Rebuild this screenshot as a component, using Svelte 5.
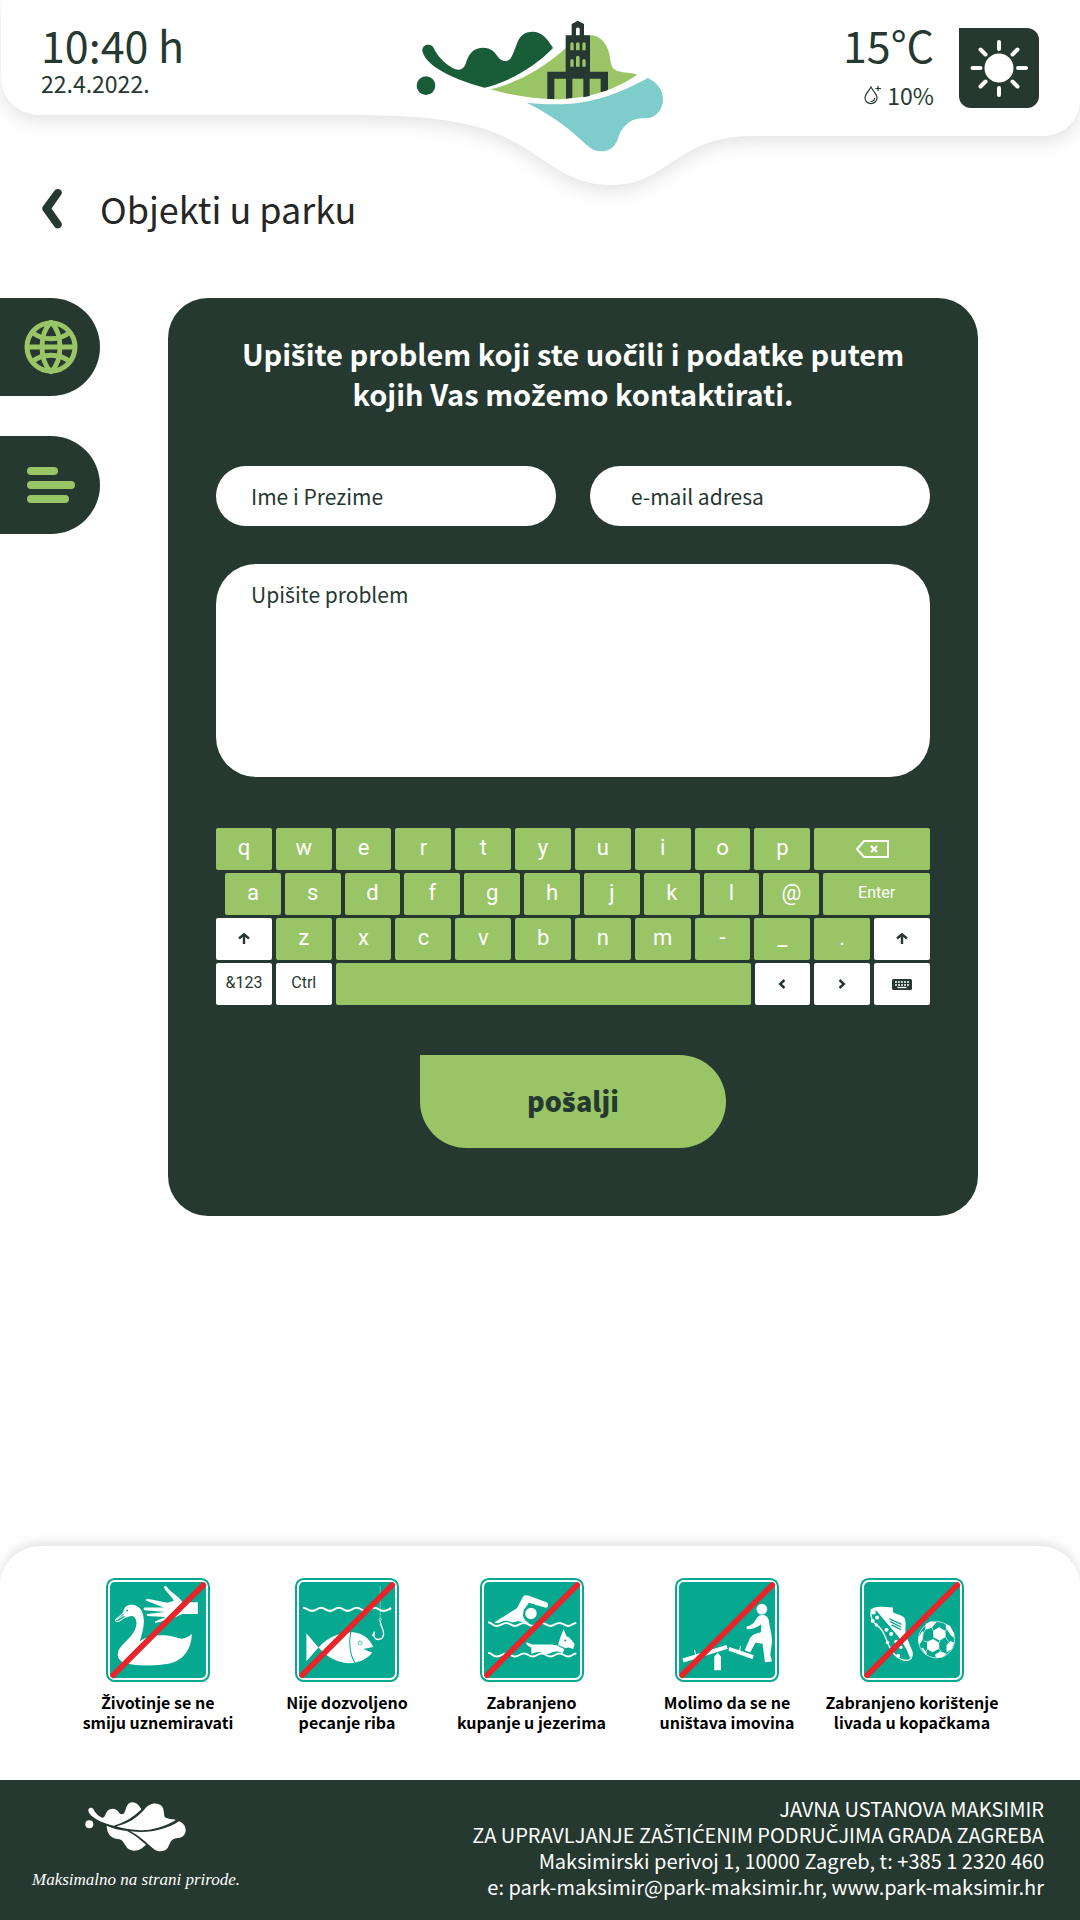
<script>
  let name = $state('');
  let email = $state('');
  let problem = $state('');

  const rowOne = ['q', 'w', 'e', 'r', 't', 'y', 'u', 'i', 'o', 'p'];
  const rowTwo = ['a', 's', 'd', 'f', 'g', 'h', 'j', 'k', 'l', '@'];
  const rowThree = ['z', 'x', 'c', 'v', 'b', 'n', 'm', '-', '_', '.'];

  const signs = [
    { id: 'swan', lines: ['Životinje se ne', 'smiju uznemiravati'] },
    { id: 'fish', lines: ['Nije dozvoljeno', 'pecanje riba'] },
    { id: 'swim', lines: ['Zabranjeno', 'kupanje u jezerima'] },
    { id: 'seesaw', lines: ['Molimo da se ne', 'uništava imovina'] },
    { id: 'boots', lines: ['Zabranjeno korištenje', 'livada u kopačkama'] }
  ];

  const type = (key) => (problem += key);

  // The main family has no Croatian accented letters, so these get their own font.
  const accented = /([čćšžČĆŠŽ])/;
  const pieces = (text) => text.split(accented).filter((part) => part !== '');
</script>

{#snippet hr(text)}{#each pieces(text) as part}{#if accented.test(part)}<span class="accent">{part}</span>{:else}{part}{/if}{/each}{/snippet}

{#snippet arrowUp()}
  <svg width="14" height="14" viewBox="0 0 14 14" aria-hidden="true">
    <path d="M7 12V3M2 6.500 7 2.400l5 4.100" fill="none" stroke="currentColor" stroke-width="2.400" />
  </svg>
{/snippet}

<div class="page">
  <header>
    <svg class="header-shape" viewBox="0 0 1080 230" preserveAspectRatio="none" aria-hidden="true">
      <path d="M1-40V76C1 98 17 115 40 115H340C440 115 480 122 520 145C556 167 572 185 612 185C668 185 676 136 752 136H1043C1064 136 1080 120 1080 98V-40Z" />
    </svg>
    <div class="clock">
      <span class="big">10:40 h</span>
      <span class="small">22.4.2022.</span>
    </div>
    <svg class="logo" width="248" height="132" viewBox="50 58 744 396" role="img" aria-label="Park Maksimir">
      <g fill="#195c38">
        <circle cx="80" cy="255" r="28" />
        <path d="M69 150C69 136 79 131 89 132C100 133 103 141 106 148C118 172 148 198 168 206C180 210 192 206 199 190C206 165 218 142 250 141C276 141 288 156 297 170C304 182 323 186 333 174C343 161 346 143 357 119C365 102 380 93 399 93C428 93 445 115 461 142C410 195 330 245 255 261C200 246 150 227 115 204C90 188 72 168 69 150Z" />
      </g>
      <path d="M273 266C350 248 430 205 499 143L535 104H572C600 104 622 125 630 160C634 180 633 198 648 208C662 217 690 214 714 222C640 270 570 294 460 296C400 293 330 283 273 266Z" fill="#9ac567" />
      <path d="M517 70L535 60L554 70V104H572V213H626V268L604 275V234H571V286L552 290V234H519V291L500 294V234H465V295H444V213H499V104H517Z" fill="#253831" />
      <path d="M530 104V86a5.500 5.500 0 0 1 11 0V104Z" fill="#fff" />
      <path d="M513 149V130a5 5 0 0 1 10 0V149ZM530 149V130a5.500 5.500 0 0 1 11 0V149ZM549 149V130a5 5 0 0 1 10 0V149ZM513 198V180a5 5 0 0 1 10 0V198ZM530 198V171a5.500 5.500 0 0 1 11 0V198ZM549 198V180a5 5 0 0 1 10 0V198Z" fill="#9ac567" />
      <path d="M382 306C420 311 490 313 540 306C620 296 690 262 746 232C775 246 791 270 791 297C790 330 765 352 745 352C715 353 700 355 683 370C662 388 660 405 653 421C643 443 625 452 607 452C580 452 565 437 553 425C500 373 440 335 382 306Z" fill="#7fcccc" />
    </svg>
    <div class="weather">
      <div class="readings">
        <span class="big">15°C</span>
        <span class="small humidity">
          <svg width="17" height="20" viewBox="0 0 17 20" fill="none" stroke="currentColor" aria-hidden="true">
            <path d="M7 2C5 6 1 9 1 13a6 5.600 0 0 0 12 0C13 9 9 6 7 2Z" stroke-width="1.200" />
            <path d="M6.500 16.500C9 16.500 10.500 15 10.700 13M14 1V6M11.500 3.500H17" stroke-width="1.200" />
          </svg>
          10%
        </span>
      </div>
      <div class="sun">
        <svg width="80" height="80" viewBox="0 0 80 80" role="img" aria-label="Sunčano">
          <circle cx="40" cy="40" r="14.500" fill="#fff" />
          <path d="M40 14v7M40 60v7M13.500 40h8M59 40h8M21.500 21.500l5 5M53.500 53.500l5 5M21.500 58.500l5-5M53.500 26.500l5-5" stroke="#fff" stroke-width="4" stroke-linecap="round" />
        </svg>
      </div>
    </div>
  </header>

  <nav class="crumb">
    <a href="#nazad" aria-label="Nazad">
      <svg width="21" height="41" viewBox="0 0 21 41" aria-hidden="true">
        <path d="M13 2C17-1 22 3 19 7L9.500 20.500L19 34C22 38 17 42.500 13 39.500L0.800 22.500C0 21.500 0 19.500 0.800 18.500Z" />
      </svg>
    </a>
    <h1>Objekti u parku</h1>
  </nav>

  <main>
    <aside>
      <button class="tab" type="button" aria-label="Jezik">
        <svg width="54" height="54" viewBox="0 0 54 54" fill="none" stroke="#9ac567" aria-hidden="true">
          <circle cx="27" cy="27" r="24" stroke-width="5" />
          <path d="M2 27H52M27 2C15 14 15 40 27 52C39 40 39 14 27 2ZM8 12C18 21 36 21 46 12M8 42C18 33 36 33 46 42" stroke-width="4.800" />
        </svg>
      </button>
      <button class="tab" type="button" aria-label="Izbornik">
        <svg width="54" height="36" viewBox="0 0 54 36" fill="#9ac567" aria-hidden="true">
          <rect x="3" width="31" height="8" rx="4" />
          <rect x="3" y="14" width="48" height="8" rx="4" />
          <rect x="3" y="28" width="42" height="8" rx="4" />
        </svg>
      </button>
    </aside>

    <form class="card" onsubmit={(e) => e.preventDefault()}>
      <h2>{@render hr('Upišite problem koji ste uočili i podatke putem')}<br />{@render hr('kojih Vas možemo kontaktirati.')}</h2>
      <div class="fields">
        <input type="text" aria-label="Ime i Prezime" placeholder="Ime i Prezime" bind:value={name} />
        <input class="email" type="email" aria-label="e-mail adresa" placeholder="e-mail adresa" bind:value={email} />
      </div>
      <div class="message">
        <textarea id="problem" bind:value={problem}></textarea>
        <label for="problem" class:filled={problem !== ''}>{@render hr('Upišite problem')}</label>
      </div>

      <div class="keyboard">
        <div class="keys">
          {#each rowOne as key}<button type="button" onclick={() => type(key)}>{key}</button>{/each}
          <button class="grow" type="button" aria-label="Briši" onclick={() => (problem = problem.slice(0, -1))}>
            <svg width="33" height="18" viewBox="0 0 33 18" fill="none" stroke="currentColor" stroke-width="2" aria-hidden="true">
              <path d="M8 1H32V17H8L1 9Z" /><path d="M15 6l6 6M21 6l-6 6" stroke-width="2.400" />
            </svg>
          </button>
        </div>
        <div class="keys indent">
          {#each rowTwo as key}<button type="button" onclick={() => type(key)}>{key}</button>{/each}
          <button class="grow word" type="button" onclick={() => type('\n')}>Enter</button>
        </div>
        <div class="keys">
          <button class="light" type="button" aria-label="Shift lijevo">{@render arrowUp()}</button>
          {#each rowThree as key}<button type="button" onclick={() => type(key)}>{key}</button>{/each}
          <button class="light" type="button" aria-label="Shift desno">{@render arrowUp()}</button>
        </div>
        <div class="keys">
          <button class="light word" type="button">&amp;123</button>
          <button class="light word" type="button">Ctrl</button>
          <button class="grow" type="button" aria-label="Razmak" onclick={() => type(' ')}></button>
          <button class="light" type="button" aria-label="Lijevo">
            <svg width="8" height="10" viewBox="0 0 8 10" aria-hidden="true"><path d="M6.500 1L2.200 5l4.300 4" fill="none" stroke="currentColor" stroke-width="2.400" /></svg>
          </button>
          <button class="light" type="button" aria-label="Desno">
            <svg width="8" height="10" viewBox="0 0 8 10" aria-hidden="true"><path d="M1.500 1l4.300 4-4.300 4" fill="none" stroke="currentColor" stroke-width="2.400" /></svg>
          </button>
          <button class="light" type="button" aria-label="Sakrij tipkovnicu">
            <svg width="20" height="11" viewBox="0 0 20 11" aria-hidden="true">
              <rect width="20" height="11" rx="1.500" fill="currentColor" />
              <path d="M3 3H17M3 6H17" stroke="#fff" stroke-width="1.600" stroke-dasharray="2 1" />
              <path d="M5.500 8.500H14.500" stroke="#fff" stroke-width="1.300" />
            </svg>
          </button>
        </div>
      </div>

      <button class="send" type="submit">{@render hr('pošalji')}</button>
    </form>
  </main>

  <section class="rules">
    {#each signs as sign}
      <figure>
        <svg width="104" height="104" viewBox="0 0 310 310" aria-hidden="true">
          <rect width="310" height="310" rx="26" fill="#06a88f" />
          <rect x="9" y="9" width="292" height="292" rx="17" fill="none" stroke="#fff" stroke-width="6" />
          {#if sign.id === 'swan'}
            <path d="M52 98C55 86 64 80 76 80C100 80 113 100 113 130C113 150 106 170 101 189C120 175 150 170 175 171C195 172 208 179 225 181C240 180 248 172 256 167C254 215 230 245 190 255C150 263 90 262 60 255C42 250 34 238 35 225C38 205 60 190 75 172C92 150 96 130 84 116C76 110 68 116 60 118C54 116 50 108 52 98Z" fill="#fff" />
            <path d="M53 102C46 114 32 118 28 125C27 132 38 131 46 124L59 116M32 124L56 110" fill="none" stroke="#fff" stroke-width="3" />
            <circle cx="63" cy="97" r="3" fill="#06a88f" />
            <path d="M228 72H274V107H228C212 112 202 122 180 126L146 134V130L178 116L122 113V107L176 101L115 96C111 94 111 88 116 88L172 88L120 68C118 65 119 62 123 62L184 74L202 68C196 52 176 40 173 28C174 21 181 24 184 30C196 45 216 54 228 72Z" fill="#fff" />
          {:else if sign.id === 'fish'}
            <path d="M24 89C36 89 38 98 51 98S66 89 78 89S92 98 104 98S119 89 131 89S145 98 157 98S172 89 184 89S198 98 210 98S225 89 237 89S251 98 263 98S276 94 287 90" fill="none" stroke="#fff" stroke-width="6" />
            <path d="M34 165L70 207L34 248ZM70 207C100 172 145 160 175 162C205 165 225 185 233 206L203 212L230 222C215 242 190 254 160 254C125 252 95 235 70 207Z" fill="#fff" />
            <path d="M166 160C160 195 164 230 179 254" fill="none" stroke="#06a88f" stroke-width="3" />
            <circle cx="194" cy="193" r="5.500" fill="none" stroke="#06a88f" stroke-width="2" />
            <path d="M254 25V120" stroke="#9bdcd0" stroke-width="2" />
            <circle cx="254" cy="124" r="3.500" fill="none" stroke="#fff" stroke-width="2" />
            <path d="M254 128C255 148 266 152 264 168C261 187 240 188 235 172L237 160L231 172" fill="none" stroke="#fff" stroke-width="4" />
          {:else if sign.id === 'swim'}
            <path d="M42 133L110 90L127 58C131 50 138 51 146 53L198 72C207 77 203 91 193 88L146 74L130 96L128 112C132 126 138 130 146 133C130 138 120 126 108 130C96 137 80 122 66 130C56 136 48 135 42 133Z" fill="#fff" />
            <circle cx="152" cy="106" r="17" fill="#fff" />
            <path d="M24 132C38 133 36 143 50 143S66 134 78 134S92 143 104 143S119 134 131 134S145 143 157 143S172 134 184 134S198 143 210 143S225 134 237 134S251 143 263 143S276 134 287 134M24 223C38 224 36 234 50 234S66 225 78 225S92 234 104 234S119 225 131 225S145 234 157 234S172 225 184 225S198 234 210 234S225 225 237 225S251 234 263 234S276 225 287 225" fill="none" stroke="#fff" stroke-width="6" />
            <path d="M137 194C142 188 150 200 160 198H215C225 200 232 200 238 206L252 212L246 224C225 214 215 222 205 226C190 228 180 216 165 222L153 226V208C146 204 140 202 137 194Z" fill="#fff" />
            <path d="M232 201L240 176L249 153L258 174L267 178L282 197L278 212L264 207L254 209Z" fill="#fff" />
            <path d="M230 198L254 212" stroke="#06a88f" stroke-width="2" />
            <circle cx="254" cy="186" r="3" fill="#06a88f" />
          {:else if sign.id === 'seesaw'}
            <path d="M22 240L153 200L157 211L26 252ZM162 206L235 230L231 242L159 216ZM117 235L127 222L137 235V275H117Z" fill="#fff" />
            <path d="M58 214L62 230M195 203L192 220" stroke="#fff" stroke-width="3" />
            <circle cx="259" cy="93" r="16" fill="#fff" />
            <path d="M252 112C264 108 276 112 279 124C282 150 292 172 288 200L284 228L289 249L268 251L261 196L240 193L224 222L208 215L222 182C232 166 244 166 256 162L257 138C245 148 230 153 216 153C210 150 213 143 219 143C240 138 240 118 252 112Z" fill="#fff" />
          {:else}
            <path d="M34 94C40 84 60 84 98 88V102C112 110 128 110 134 122C140 140 130 156 140 178C146 196 158 215 156 232L148 236C140 210 120 180 98 156L50 98Z" fill="#fff" />
            <path d="M88 122L124 138M90 130L122 146M94 140L122 154" stroke="#06a88f" stroke-width="4" />
            <path d="M34 92C30 115 34 132 52 142C78 160 76 190 92 212C106 238 130 250 146 244C156 240 158 225 152 212" fill="none" stroke="#fff" stroke-width="4" />
            <g fill="#fff">
              <circle cx="40" cy="102" r="7" /><circle cx="51" cy="118" r="6" /><circle cx="38" cy="128" r="6" /><circle cx="49" cy="140" r="5" />
              <circle cx="79" cy="154" r="6" /><circle cx="93" cy="167" r="6" /><circle cx="82" cy="192" r="5" /><circle cx="108" cy="190" r="6" /><circle cx="122" cy="207" r="5" /><circle cx="114" cy="232" r="6" />
            </g>
            <circle cx="228" cy="184" r="54" fill="none" stroke="#fff" stroke-width="2" />
            <path d="M218 157L236 147L255 158V176L238 186L219 177ZM200 190L218 182L236 193V211L216 221L200 212ZM196 136L212 129L228 132L214 148L194 154ZM255 136L268 142L281 166L280 178L270 170L256 148ZM174 178L186 158L190 162L186 186L176 200ZM258 200L270 188L280 192L274 212L258 222ZM224 228L240 218L258 226L246 236L226 238ZM182 208L190 210L200 226L196 230Z" fill="#fff" />
            <path d="M214 148L219 157M255 158L258 150M255 176L264 190M238 186L236 193M190 188L200 190M236 211L242 218M200 212L196 222M190 162L196 152" stroke="#fff" stroke-width="2" />
          {/if}
          <path d="M21 290L290 21" stroke="#e8252a" stroke-width="17" stroke-linecap="round" />
        </svg>
        <figcaption>{@render hr(sign.lines[0])}<br />{@render hr(sign.lines[1])}</figcaption>
      </figure>
    {/each}
  </section>

  <footer>
    <div class="brand">
      <svg width="102" height="50" viewBox="266 97 306 150" fill="#fff" aria-hidden="true">
        <circle cx="279" cy="164" r="12" />
        <path d="M276 124C275 113 288 111 292 120C298 132 310 142 319 144C330 143 325 118 348 117C368 118 365 133 377 134C392 134 384 99 408 98C422 99 430 110 435 119C410 145 380 160 352 168C315 160 280 142 276 124Z" />
        <path d="M360 170C400 160 420 145 443 121C455 105 468 101 480 102C508 105 500 130 506 143C515 149 530 148 538 151C500 175 450 185 425 181C400 180 380 177 360 170Z" />
        <path d="M402 185C460 192 510 180 548 155C562 160 569 172 568 184C566 198 556 205 544 205C520 208 522 222 514 235C505 247 485 248 472 238C450 220 430 198 402 185Z" />
        <path d="M331 168C350 178 370 180 392 184C415 195 433 212 449 225C440 232 432 243 412 243C385 242 388 215 370 209C350 207 332 200 331 168Z" />
      </svg>
      <span>Maksimalno na strani prirode.</span>
    </div>
    <address>
      JAVNA USTANOVA MAKSIMIR<br />
      {@render hr('ZA UPRAVLJANJE ZAŠTIĆENIM PODRUČJIMA GRADA ZAGREBA')}<br />
      Maksimirski perivoj 1, 10000 Zagreb, t: +385 1 2320 460<br />
      e: <a href="mailto:park-maksimir@park-maksimir.hr">park-maksimir@park-maksimir.hr</a>, <a href="https://www.park-maksimir.hr">www.park-maksimir.hr</a>
    </address>
  </footer>
</div>

<style>
  :global(body) {
    margin: 0;
    background: #fefefe;
  }
  .page {
    --dark: #253930;
    --lime: #9ac567;
    --sans: 'Noto Sans CJK SC', 'Noto Sans', sans-serif;
    display: flex;
    flex-direction: column;
    min-height: 100vh;
    overflow-x: hidden;
    color: var(--dark);
    font-family: var(--sans);
  }
  .accent {
    font-family: 'Noto Sans', sans-serif;
    line-height: 0;
  }
  button, input, textarea {
    box-sizing: border-box;
    margin: 0;
    border: 0;
    font-family: inherit;
    color: inherit;
  }
  button {
    padding: 0;
    cursor: pointer;
  }
  svg {
    display: block;
    flex: none;
  }

  header {
    position: relative;
    display: grid;
    grid-template-columns: 1fr auto 1fr;
    align-items: start;
    padding: 20px 41px 0 41px;
  }
  .header-shape {
    position: absolute;
    z-index: -1;
    top: 0;
    left: 0;
    width: 100%;
    height: 230px;
    fill: #fff;
    filter: drop-shadow(0 6px 8px rgb(0 0 0 / 10%));
  }
  .clock, .readings {
    display: flex;
    flex-direction: column;
  }
  .big {
    font-size: 43px;
    line-height: 48px;
  }
  .small {
    font-size: 23px;
    line-height: 30px;
  }
  .weather {
    display: flex;
    justify-content: flex-end;
    gap: 25px;
  }
  .readings {
    align-items: flex-end;
    gap: 12px;
  }
  .humidity {
    display: flex;
    align-items: center;
    gap: 6px;
  }
  .sun {
    margin-top: 8px;
    height: 80px;
    border-radius: 0 12px 12px 12px;
    background: var(--dark);
  }

  .crumb {
    display: flex;
    align-items: center;
    gap: 37px;
    padding: 28px 42px 0;
  }
  .crumb path {
    fill: var(--dark);
  }
  h1 {
    margin: 0;
    font-size: 36px;
    font-weight: 400;
    line-height: 56px;
    color: #262626;
  }

  main {
    display: flex;
    align-items: flex-start;
    gap: 68px;
    padding: 62px 102px 60px 0;
  }
  aside {
    display: flex;
    flex-direction: column;
    gap: 40px;
  }
  .tab {
    display: flex;
    align-items: center;
    width: 100px;
    height: 98px;
    padding-left: 24px;
    border-radius: 0 49px 49px 0;
    background: var(--dark);
  }
  .card {
    flex: 1;
    display: flex;
    flex-direction: column;
    padding: 35px 48px 68px;
    border-radius: 40px;
    background: var(--dark);
  }
  h2 {
    margin: 0 0 53px;
    font-size: 29px;
    font-weight: 700;
    line-height: 40px;
    text-align: center;
    white-space: nowrap;
    color: #fff;
  }
  .fields {
    display: grid;
    grid-template-columns: 1fr 1fr;
    gap: 34px;
    margin-bottom: 38px;
  }
  input, textarea {
    width: 100%;
    background: #fff;
    font-size: 21px;
    line-height: 32px;
  }
  input {
    height: 60px;
    padding: 0 35px;
    border-radius: 30px;
  }
  .email {
    padding-left: 41px;
  }
  .message {
    display: grid;
  }
  .message > * {
    grid-area: 1 / 1;
  }
  textarea {
    display: block;
    height: 213px;
    padding: 14px 35px;
    border-radius: 40px;
    resize: none;
  }
  label {
    padding: 14px 35px;
    font-size: 21px;
    line-height: 32px;
    pointer-events: none;
  }
  label.filled {
    visibility: hidden;
  }
  ::placeholder {
    color: var(--dark);
    opacity: 1;
  }

  .keyboard {
    display: flex;
    flex-direction: column;
    gap: 3px;
    margin: 51px 0 50px;
  }
  .keys {
    display: flex;
    gap: 4px;
  }
  .keys button {
    display: flex;
    flex: 0 0 calc((100% - 44px) / 12);
    align-items: center;
    justify-content: center;
    height: 42px;
    padding-bottom: 2px;
    border-radius: 2px;
    background: var(--lime);
    color: #fff;
    font-family: Roboto, sans-serif;
    font-size: 22px;
    line-height: 24px;
  }
  .keys button.grow {
    flex: 1;
  }
  .keys button.light {
    background: #fff;
    color: var(--dark);
  }
  .keys button.word {
    font-size: 16px;
  }
  .keys button:has(svg) {
    padding-bottom: 0;
  }
  .indent button:first-child {
    margin-left: 9px;
  }
  .send {
    align-self: center;
    width: 306px;
    height: 93px;
    padding-bottom: 3px;
    border-radius: 0 47px 47px 47px;
    background: var(--lime);
    font-size: 27px;
    font-weight: 900;
  }

  .rules {
    display: grid;
    grid-template-columns: 204fr 174fr 195fr 196fr 174fr;
    margin-top: auto;
    padding: 32px 81px 48px 56px;
    border-radius: 40px 40px 0 0;
    background: #fff;
    box-shadow: 0 -4px 10px rgb(0 0 0 / 10%);
  }
  figure {
    display: flex;
    flex-direction: column;
    align-items: center;
    gap: 10px;
    margin: 0;
  }
  figcaption {
    font-size: 16px;
    font-weight: 700;
    line-height: 20px;
    text-align: center;
    white-space: nowrap;
    color: #000;
  }

  footer {
    position: relative;
    display: flex;
    align-items: flex-start;
    justify-content: space-between;
    padding: 16px 36px 20px 32px;
    background: var(--dark);
    color: #fff;
  }
  .brand {
    display: flex;
    flex-direction: column;
    align-items: center;
    gap: 16px;
    padding-top: 6px;
    font-family: 'Liberation Serif', serif;
    font-size: 17px;
    font-style: italic;
    line-height: 24px;
  }
  address {
    font-size: 20px;
    font-style: normal;
    line-height: 26px;
    text-align: right;
  }
  address a {
    color: inherit;
    text-decoration: none;
  }
</style>
